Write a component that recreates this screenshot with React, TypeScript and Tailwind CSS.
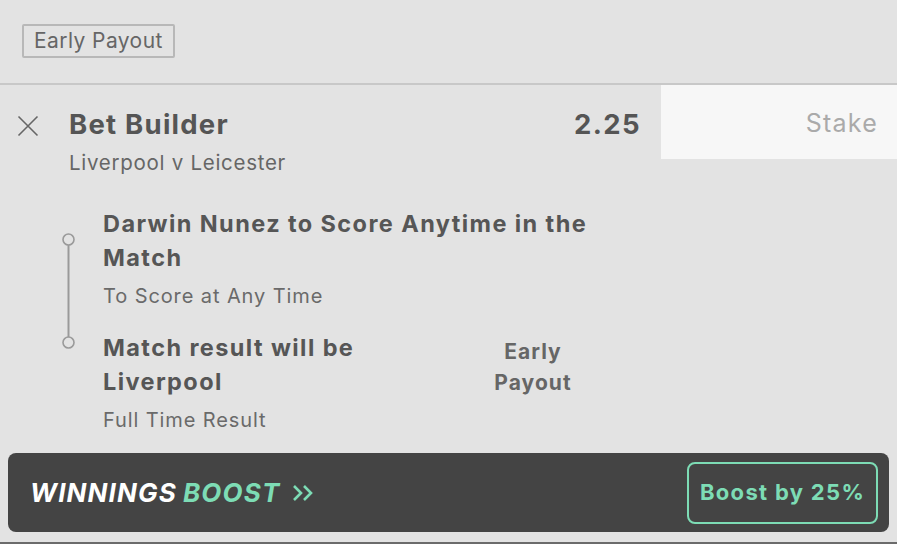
import React from "react";

const font = { fontFamily: "Inter, 'Noto Sans', sans-serif" };

const Leg: React.FC<{ title: React.ReactNode; sub: string }> = ({ title, sub }) => (
  <div className="flex flex-col">
    <div className="text-[23.5px] leading-[34px] font-bold tracking-[0.06em] text-[#565656]">{title}</div>
    <div className="mt-[7px] text-[20px] leading-[28px] tracking-[0.045em] text-[#6a6a6a]">{sub}</div>
  </div>
);

const App: React.FC = () => {
  return (
    <div className="w-[897px] h-[544px] bg-[#e3e3e3] flex flex-col overflow-hidden" style={font}>
      {/* top badge */}
      <div className="h-[85px] pt-[24px] pl-[22px] border-b-2 border-[#c8c8c8] shrink-0">
        <span className="inline-flex items-center h-[34px] px-[10px] border-2 border-[#b8b8b8] rounded-[2px] text-[21px] tracking-[0.02em] text-[#666]">
          Early Payout
        </span>
      </div>

      {/* header */}
      <div className="flex">
        <div className="flex-1 flex pl-[17px] pr-[20px] pt-[22px]">
          <svg width="22" height="22" viewBox="0 0 22 22" className="mt-[8px] shrink-0">
            <path d="M1.5 1.5 L20.5 20.5 M20.5 1.5 L1.5 20.5" stroke="#666" strokeWidth="1.6" fill="none" />
          </svg>
          <div className="ml-[30px] flex-1 flex flex-col">
            <div className="flex items-center justify-between h-[36px]">
              <span className="text-[27.5px] font-bold tracking-[0.045em] text-[#555]">Bet Builder</span>
              <span className="text-[27.5px] font-bold tracking-[0.05em] text-[#555]">2.25</span>
            </div>
            <span className="mt-[6px] text-[20.5px] leading-[28px] tracking-[0.035em] text-[#666]">
              Liverpool v Leicester
            </span>
          </div>
        </div>
        <div className="w-[236px] h-[74px] bg-[#f7f7f7] flex items-center justify-end pr-[19px] pt-[4px] text-[25px] tracking-[0.05em] text-[#aaa]">
          Stake
        </div>
      </div>

      {/* legs */}
      <div className="flex mt-[30px] pl-[62px]">
        <svg width="13" height="118" viewBox="0 0 13 118" className="mt-[26px] shrink-0">
          <line x1="6.5" y1="12" x2="6.5" y2="104" stroke="#9a9a9a" strokeWidth="2" />
          <circle cx="6.5" cy="6.5" r="5.5" stroke="#9a9a9a" strokeWidth="1.6" fill="none" />
          <circle cx="6.5" cy="109.5" r="5.5" stroke="#9a9a9a" strokeWidth="1.6" fill="none" />
        </svg>
        <div className="ml-[28px] flex flex-col gap-[21px]">
          <div className="w-[520px]">
            <Leg title="Darwin Nunez to Score Anytime in the Match" sub="To Score at Any Time" />
          </div>
          <div className="flex">
            <div className="w-[300px]">
              <Leg title="Match result will be Liverpool" sub="Full Time Result" />
            </div>
            <div className="ml-[80px] mt-[5px] w-[100px] text-center text-[21px] leading-[31px] font-bold tracking-[0.05em] text-[#666]">
              Early Payout
            </div>
          </div>
        </div>
      </div>

      {/* boost bar */}
      <div className="mt-auto mb-[10px] mx-[8px] h-[79px] rounded-[8px] bg-[#444] flex items-center justify-between pl-[22px] pr-[11px]">
        <div className="flex items-center text-[26px] font-bold italic tracking-[0.045em]">
          <span className="text-white">WINNINGS</span>
          <span className="ml-[6px] text-[#7ddcb5]">BOOST</span>
          <svg width="24" height="20" viewBox="0 0 24 20" className="ml-[11px]">
            <path d="M3 3 L10 10 L3 17 M13 3 L20 10 L13 17" stroke="#7ddcb5" strokeWidth="2.6" fill="none" />
          </svg>
        </div>
        <div className="w-[191px] h-[62px] border-2 border-[#7ddcb5] rounded-[8px] flex items-center justify-center text-[22px] font-bold tracking-[0.06em] text-[#7ddcb5]">
          Boost by 25%
        </div>
      </div>
      <div className="h-[2px] bg-[#6b6b6b] shrink-0" />
    </div>
  );
};

export default App;
